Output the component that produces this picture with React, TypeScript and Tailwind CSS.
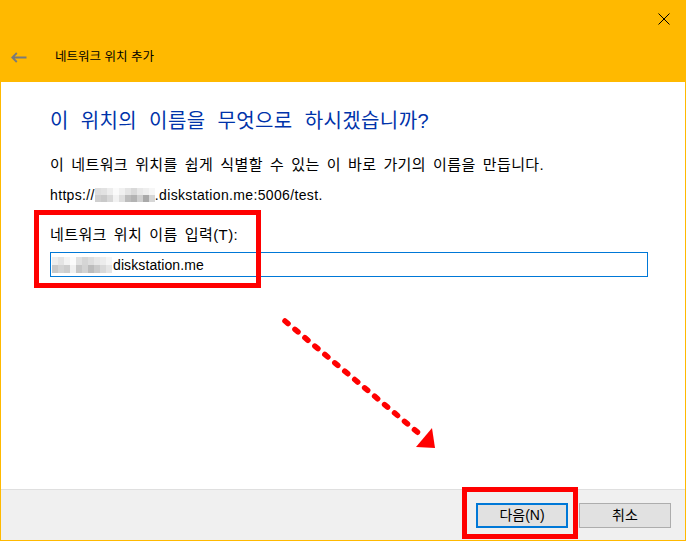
import React from 'react';

const font = { fontFamily: '"Liberation Sans", "Noto Sans CJK KR", sans-serif' };

// pixelated blur blocks (written out so tailwind sees them)
const urlBlur = [
    ['bg-[#dedede]', 'bg-[#e2e2e2]', 'bg-[#ededed]', 'bg-[#fafafa]', 'bg-[#f0f0f0]', 'bg-[#e4e4e4]', 'bg-[#d9d9d9]', 'bg-[#e8e8e8]', 'bg-[#eeeeee]', 'bg-[#f6f6f6]'],
    ['bg-[#cfcfcf]', 'bg-[#c9c9c9]', 'bg-[#d8d8d8]', 'bg-[#f2f2f2]', 'bg-[#dedede]', 'bg-[#bdbdbd]', 'bg-[#b3b3b3]', 'bg-[#cfcfcf]', 'bg-[#a9a9a9]', 'bg-[#d6d6d6]'],
];

const inputBlur = [
    ['bg-[#ededed]', 'bg-[#e4e4e4]', 'bg-[#f3f3f3]', 'bg-[#fbfbfb]', 'bg-[#e0e0e0]', 'bg-[#d5d5d5]', 'bg-[#dddddd]', 'bg-[#e7e7e7]', 'bg-[#ececec]', 'bg-[#f5f5f5]'],
    ['bg-[#c8c8c8]', 'bg-[#d4d4d4]', 'bg-[#cdcdcd]', 'bg-[#f0f0f0]', 'bg-[#c6c6c6]', 'bg-[#d2d2d2]', 'bg-[#bcbcbc]', 'bg-[#cacaca]', 'bg-[#d9d9d9]', 'bg-[#e5e5e5]'],
];

function Blur({ rows, cell }: { rows: string[][]; cell: string }) {
    return (
        <span className="inline-flex flex-col align-middle">
            {rows.map((row, i) => (
                <span key={i} className="flex">
                    {row.map((c, j) => (
                        <span key={j} className={`${cell} ${c}`} />
                    ))}
                </span>
            ))}
        </span>
    );
}

export default function App() {
    return (
        <div className="relative w-[686px] h-[541px] bg-[#ffb900] flex flex-col px-[1px] pb-[1px] overflow-hidden" style={font}>
            {/* title bar */}
            <div className="h-[82px] flex flex-col shrink-0">
                <div className="flex justify-end pt-[13px] pr-[15px] h-[47px]">
                    <svg width="12" height="12" viewBox="0 0 12 12">
                        <path d="M0.5 0.5 L11.5 11.5 M11.5 0.5 L0.5 11.5" stroke="#000" strokeWidth="1" />
                    </svg>
                </div>
                <div className="flex items-center h-[20px]">
                    <svg width="16" height="11" viewBox="0 0 16 11" className="ml-[10px]">
                        <path d="M15.5 5.5 H1.5 M5.8 1 L1.3 5.5 L5.8 10" stroke="#7a7a7a" strokeWidth="1.8" fill="none" />
                    </svg>
                    <span className="ml-[28px] text-[12.5px] text-black leading-[20px]">네트워크 위치 추가</span>
                </div>
            </div>

            {/* body */}
            <div className="relative flex-1 bg-white pl-[49px]">
                <div className="pt-[26px] text-[20px] leading-[26px] text-[#0033aa] tracking-[0.4px] [word-spacing:6px]">
                    이 위치의 이름을 무엇으로 하시겠습니까?
                </div>
                <div className="mt-[21px] text-[15px] leading-[20px] text-black tracking-[0.4px] [word-spacing:2.5px]">
                    이 네트워크 위치를 쉽게 식별할 수 있는 이 바로 가기의 이름을 만듭니다.
                </div>
                <div className="mt-[10px] flex items-center text-[14px] leading-[20px] text-black tracking-[0.35px]">
                    <span>https://</span>
                    <Blur rows={urlBlur} cell="w-[6px] h-[7px]" />
                    <span>.diskstation.me:5006/test.</span>
                </div>
                <div className="mt-[20px] text-[15px] leading-[20px] text-black tracking-[0.4px] [word-spacing:2.5px]">
                    네트워크 위치 이름 입력(T):
                </div>
                <div className="mt-[7px] w-[598px] h-[25px] border border-[#0078d7] flex items-center pl-[1px]">
                    <Blur rows={inputBlur} cell="w-[6px] h-[8px]" />
                    <span className="ml-[1px] text-[14px] leading-[20px] text-black tracking-[0.1px]">diskstation.me</span>
                </div>

                {/* dotted arrow annotation */}
                <svg className="absolute left-[270px] top-[226px]" width="180" height="150" viewBox="270 308 180 150">
                    <path d="M284 321 L421 436" stroke="#ff0000" strokeWidth="5.5" strokeLinecap="round" strokeDasharray="4 9" fill="none" />
                    <path d="M415 447 L434 448 L431 428 Z" fill="#ff0000" />
                </svg>
            </div>

            {/* footer */}
            <div className="h-[51px] shrink-0 bg-[#f0f0f0] border-t border-[#dfdfdf] flex items-center justify-end pr-[14px] gap-[11px]">
                <button className="w-[92px] h-[25px] bg-[#e1e1e1] border-2 border-[#0078d7] text-[14px] text-black leading-none">
                    다음(N)
                </button>
                <button className="w-[92px] h-[25px] bg-[#e1e1e1] border border-[#adadad] text-[14px] text-black leading-none">
                    취소
                </button>
            </div>

            {/* red highlight boxes */}
            <div className="absolute left-[34px] top-[210px] w-[227px] h-[78px] border-[5px] border-[#ff0000]" />
            <div className="absolute left-[462px] top-[487px] w-[116px] h-[52px] border-[5px] border-[#ff0000]" />
        </div>
    );
}
